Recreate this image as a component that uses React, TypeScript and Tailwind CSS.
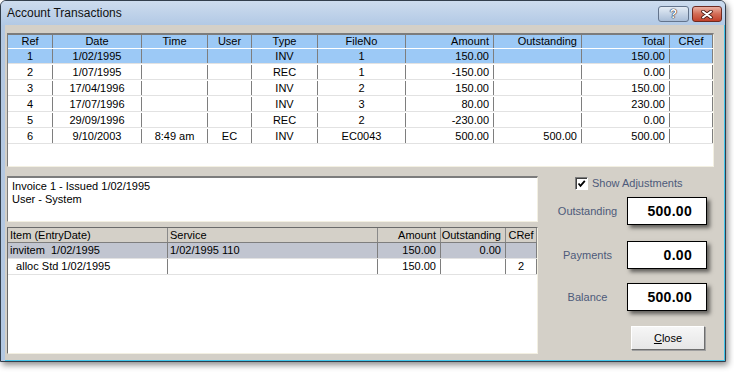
import React from 'react';

type Align = 'left' | 'center' | 'right';

interface Col {
  label: string;
  w: string;
  align: Align;
}

const topCols: Col[] = [
  { label: 'Ref', w: 'w-[45px]', align: 'center' },
  { label: 'Date', w: 'w-[89px]', align: 'center' },
  { label: 'Time', w: 'w-[66px]', align: 'center' },
  { label: 'User', w: 'w-[44px]', align: 'center' },
  { label: 'Type', w: 'w-[66px]', align: 'center' },
  { label: 'FileNo', w: 'w-[88px]', align: 'center' },
  { label: 'Amount', w: 'w-[88px]', align: 'right' },
  { label: 'Outstanding', w: 'w-[88px]', align: 'right' },
  { label: 'Total', w: 'w-[88px]', align: 'right' },
  { label: 'CRef', w: 'w-[43px]', align: 'center' },
];

const topRows = [
  ['1', '1/02/1995', '', '', 'INV', '1', '150.00', '', '150.00', ''],
  ['2', '1/07/1995', '', '', 'REC', '1', '-150.00', '', '0.00', ''],
  ['3', '17/04/1996', '', '', 'INV', '2', '150.00', '', '150.00', ''],
  ['4', '17/07/1996', '', '', 'INV', '3', '80.00', '', '230.00', ''],
  ['5', '29/09/1996', '', '', 'REC', '2', '-230.00', '', '0.00', ''],
  ['6', '9/10/2003', '8:49 am', 'EC', 'INV', 'EC0043', '500.00', '500.00', '500.00', ''],
];

const itemCols: Col[] = [
  { label: 'Item (EntryDate)', w: 'w-[160px]', align: 'left' },
  { label: 'Service', w: 'w-[210px]', align: 'left' },
  { label: 'Amount', w: 'w-[63px]', align: 'right' },
  { label: 'Outstanding', w: 'w-[65px]', align: 'right' },
  { label: 'CRef', w: 'w-[31px]', align: 'center' },
];

const itemRows = [
  ['invitem\u00a0 1/02/1995', '1/02/1995 110', '150.00', '0.00', ''],
  ['\u00a0 alloc Std 1/02/1995', '', '150.00', '', '2'],
];

const alignClass = (a: Align) =>
  a === 'center' ? 'justify-center' : a === 'right' ? 'justify-end pr-[4px]' : 'justify-start pl-[2px]';

const ValueBox = ({ label, value }: { label: string; value: string }) => (
  <div className="flex items-center">
    <div className="w-[79px] text-center text-[11px] text-[#4d5a7a]">{label}</div>
    <div className="w-[80px] h-[28px] bg-white border border-black shadow-[3px_3px_4px_rgba(0,0,0,0.55)] flex items-center justify-end pr-[14px] text-[14px] font-bold tracking-[0.3px] text-black">
      {value}
    </div>
  </div>
);

export default function App() {
  return (
    <div className="w-[734px] h-[376px] bg-white font-['Liberation_Sans',Arial,sans-serif] text-black">
      <div className="w-[726px] h-[362px] flex flex-col rounded-t-[6px] border border-[#323e4c] overflow-hidden shadow-[2px_3px_6px_rgba(0,0,0,0.45)] bg-[#b3c8e2]">
        {/* Title bar */}
        <div className="h-[24px] flex items-start justify-between bg-gradient-to-b from-[#cddcee] to-[#b2c9e5]">
          <span className="pl-[6px] pt-[5px] text-[12px] leading-[14px] text-[#111]">Account Transactions</span>
          <div className="flex gap-[3px] pt-[5px] pr-[3px]">
            <div className="w-[31px] h-[16px] rounded-[3px] border border-[#63748c] bg-gradient-to-b from-[#e4ecf5] to-[#a9bdd7] flex items-center justify-center">
              <span className="text-[12px] font-bold leading-none text-white [text-shadow:0_0_1px_#223,0_0_1px_#223,0_0_1px_#223]">?</span>
            </div>
            <div className="w-[30px] h-[16px] rounded-[3px] border border-[#6e2a20] bg-gradient-to-b from-[#eab0a2] via-[#d26c56] to-[#c2402a] flex items-center justify-center">
              <svg width="12" height="9" viewBox="0 0 12 9">
                <path d="M2 1.5 L10 7.5 M10 1.5 L2 7.5" stroke="#4a1a12" strokeWidth="3.6" strokeLinecap="round" />
                <path d="M2 1.5 L10 7.5 M10 1.5 L2 7.5" stroke="#ffffff" strokeWidth="2" strokeLinecap="round" />
              </svg>
            </div>
          </div>
        </div>

        {/* Body */}
        <div className="flex-1 flex">
          <div className="w-[4px]" />
          <div className="flex-1 bg-[#d4d0c8] border-r border-b border-[#40c4ea] pl-[2px] pt-[8px]">
            {/* Transactions grid */}
            <div className="w-[707px] h-[134px] bg-white border-t-2 border-l border-t-[#7c7c7c] border-l-[#7c7c7c] border-b border-r border-b-[#f3f0e2] border-r-[#f3f0e2] text-[11px] leading-none">
              <div className="flex h-[13px] bg-[#9cc9f6]">
                {topCols.map((c, i) => (
                  <div key={i} className={`${c.w} shrink-0 h-full flex items-center border-r border-[#7e7e7e] ${alignClass(c.align)}`}>
                    {c.label}
                  </div>
                ))}
              </div>
              {topRows.map((r, ri) => (
                <div key={ri} className="flex h-[16px] border-b border-[#e2e2e2] border-t border-t-white">
                  {r.map((v, ci) => (
                    <div
                      key={ci}
                      className={`${topCols[ci].w} shrink-0 h-full flex items-center border-r border-[#7e7e7e] ${alignClass(topCols[ci].align)} ${ri === 0 ? 'bg-[#9cc9f6]' : ''}`}
                    >
                      {v}
                    </div>
                  ))}
                </div>
              ))}
            </div>

            {/* Lower section */}
            <div className="flex mt-[9px]">
              <div className="w-[531px] flex flex-col">
                <div className="h-[46px] bg-white border-t-2 border-l border-t-[#7c7c7c] border-l-[#7c7c7c] border-b border-r border-b-[#f3f0e2] border-r-[#f3f0e2] pl-[4px] pt-[2px] text-[11px] leading-[13px]">
                  <div>Invoice 1 - Issued 1/02/1995</div>
                  <div>User - System</div>
                </div>

                <div className="mt-[5px] h-[127px] bg-white border-t border-l border-t-[#6a6a6a] border-l-[#6a6a6a] border-b border-r border-b-[#f3f0e2] border-r-[#f3f0e2] text-[11px] leading-none">
                  <div className="flex h-[15px] bg-[#d4d0c8] border-b border-[#7e7e7e]">
                    {itemCols.map((c, i) => (
                      <div key={i} className={`${c.w} shrink-0 h-full flex items-center border-r border-[#8a8a8a] ${alignClass(c.align)}`}>
                        {c.label}
                      </div>
                    ))}
                  </div>
                  {itemRows.map((r, ri) => (
                    <div key={ri} className={`flex h-[16px] border-b border-[#e2e2e2] ${ri === 0 ? 'bg-[#c1c5d0]' : ''}`}>
                      {r.map((v, ci) => (
                        <div key={ci} className={`${itemCols[ci].w} shrink-0 h-full flex items-center whitespace-pre border-r border-[#7e7e7e] ${alignClass(itemCols[ci].align)}`}>
                          {v}
                        </div>
                      ))}
                    </div>
                  ))}
                </div>
              </div>

              {/* Totals panel */}
              <div className="flex-1 flex flex-col pl-[10px]">
                <div className="flex items-center mt-[1px] ml-[27px] h-[13px]">
                  <div className="w-[13px] h-[13px] bg-white border border-[#7c7c7c] border-b-white border-r-white shadow-[inset_1px_1px_0_#404040] flex items-center justify-center">
                    <svg width="9" height="9" viewBox="0 0 9 9">
                      <path d="M1.5 4.5 L3.5 6.8 L7.8 1.8" stroke="#000" strokeWidth="1.8" fill="none" />
                    </svg>
                  </div>
                  <span className="ml-[4px] text-[11px] text-[#4d5a7a]">Show Adjustments</span>
                </div>
                <div className="mt-[7px]">
                  <ValueBox label="Outstanding" value="500.00" />
                </div>
                <div className="mt-[16px]">
                  <ValueBox label="Payments" value="0.00" />
                </div>
                <div className="mt-[14px]">
                  <ValueBox label="Balance" value="500.00" />
                </div>
                <button className="mt-[15px] ml-[83px] w-[74px] h-[24px] bg-gradient-to-b from-[#f6f6f6] to-[#e6e6e6] border border-[#ffffff] border-b-[#6e6e6e] border-r-[#6e6e6e] shadow-[1px_1px_0_#a0a0a0] text-[11px] text-black flex items-center justify-center">
                  <span className="underline">C</span>lose
                </button>
              </div>
            </div>
          </div>
        </div>
      </div>
    </div>
  );
}
